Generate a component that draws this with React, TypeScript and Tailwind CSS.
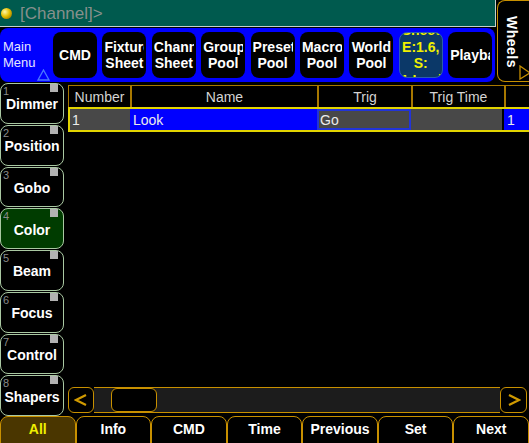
import React from "react";

const menuButtons: { lines: string[]; active?: boolean }[] = [
  { lines: ["CMD"] },
  { lines: ["Fixture", "Sheet"] },
  { lines: ["Channel", "Sheet"] },
  { lines: ["Group", "Pool"] },
  { lines: ["Preset", "Pool"] },
  { lines: ["Macro", "Pool"] },
  { lines: ["World", "Pool"] },
  { lines: ["Sheet", "E:1.6,", "S:", "1 Look"], active: true },
  { lines: ["Playback"] },
];

const sideButtons = ["Dimmer", "Position", "Gobo", "Color", "Beam", "Focus", "Control", "Shapers"];
const bottomButtons = ["All", "Info", "CMD", "Time", "Previous", "Set", "Next"];

function Chevron({ dir }: { dir: "left" | "right" }) {
  return (
    <svg width="14" height="14" viewBox="0 0 14 14">
      <polyline
        points={dir === "left" ? "12,2 2,7 12,12" : "2,2 12,7 2,12"}
        fill="none"
        stroke="#d09a00"
        strokeWidth="2.2"
        strokeLinejoin="miter"
      />
    </svg>
  );
}

export default function App() {
  return (
    <div className="w-[529px] h-[443px] bg-black overflow-hidden flex flex-col font-['Liberation_Sans',Arial,sans-serif]">
      {/* top area */}
      <div className="flex h-[83px] shrink-0">
        <div className="w-[497px] shrink-0 flex flex-col">
          <div className="h-[27px] mr-[1px] bg-[#005a4e] border-b border-r border-[#c6d0cc] flex items-center">
            <div className="ml-[1px] w-[11px] h-[11px] rounded-full bg-[radial-gradient(circle_at_35%_35%,#fff6a8,#e8c000_45%,#7a5a00)]" />
            <span className="ml-[8px] text-[17px] leading-none text-[#86908c]">[Channel]&gt;</span>
          </div>
          <div className="relative mt-[1px] h-[54px] mr-[2px] bg-[#0000ff] rounded-lg flex items-center pl-[3px]">
            <div className="w-[50px] shrink-0 text-[13px] leading-[16px] text-[#e4e4ff]">
              <div>Main</div>
              <div>Menu</div>
            </div>
            <svg className="absolute left-[37px] top-[41px]" width="13" height="12" viewBox="0 0 13 12">
              <polygon points="6.5,1 12,11 1,11" fill="none" stroke="#4a78ff" strokeWidth="1.3" />
            </svg>
            <div className="flex gap-[5.4px] h-[46px]">
              {menuButtons.map((b, i) => (
                <div
                  key={i}
                  className={
                    b.active
                      ? "w-[44px] shrink-0 rounded-lg bg-[#0b3868] border border-[#2c5cb0] overflow-hidden flex flex-col items-center justify-center px-[1px] text-[#f0f000] font-bold text-[14px] leading-[16.5px] text-center"
                      : "w-[44px] shrink-0 rounded-lg bg-black overflow-hidden flex flex-col items-center justify-center px-[2px] text-white font-bold text-[14px] leading-[16.5px] text-center"
                  }
                >
                  {b.lines.map((l, j) => (
                    <div key={j} className="w-full whitespace-nowrap shrink-0 overflow-hidden">
                      {l}
                    </div>
                  ))}
                </div>
              ))}
            </div>
          </div>
        </div>
        <div className="relative w-[32px] h-[82px] bg-black border-t border-l border-b border-[#c89000] rounded-l-lg flex flex-col items-center">
          <span className="mt-[15px] mr-[4px] [writing-mode:vertical-rl] text-white font-bold text-[14px] leading-none tracking-[0.5px]">
            Wheels
          </span>
          <svg className="absolute right-0 bottom-[1px]" width="10" height="15" viewBox="0 0 10 15">
            <polygon points="1,1 11,8 1,14" fill="none" stroke="#c89000" strokeWidth="1.3" />
          </svg>
        </div>
      </div>

      {/* middle */}
      <div className="flex h-[333px] shrink-0">
        <div className="w-[64px] flex flex-col gap-[1px]">
          {sideButtons.map((s, i) => (
            <div
              key={s}
              className={
                "relative flex-1 rounded-lg border border-[#a9c8a2] flex items-center justify-center pt-[2px] " +
                (s === "Color" ? "bg-[#003c00]" : "bg-black")
              }
            >
              <span className="absolute left-[2px] top-[2px] text-[11px] leading-none text-[#8a8a8a]">{i + 1}</span>
              <span className="absolute right-[5px] top-0 w-[8px] h-[8px] bg-[#b2b2b2]" />
              <span className="text-white font-bold text-[14px] leading-none">{s}</span>
            </div>
          ))}
        </div>

        <div className="ml-[4px] flex-1 flex flex-col">
          {/* table */}
          <div className="mt-[2px]">
            <div className="flex h-[22px] border-t border-[#a87800] text-[#d4d4d4] text-[14px]">
              {[
                ["Number", "w-[62px] border-l"],
                ["Name", "w-[187px] border-l-2"],
                ["Trig", "w-[94px] border-l-2"],
                ["Trig Time", "w-[93px] border-l-2"],
                ["", "flex-1 border-l-2"],
              ].map(([t, c], i) => (
                <div key={i} className={c + " border-[#a87800] flex items-center justify-center leading-none whitespace-nowrap"}>
                  {t}
                </div>
              ))}
            </div>
            <div className="flex h-[25px] border-y-2 border-l-2 border-[#e2d400] text-[14px] text-[#ececec] leading-none">
              <div className="w-[60px] bg-[#484848] flex items-center pl-[2px]">1</div>
              <div className="w-[187px] bg-[#0000ff] flex items-center pl-[3px]">Look</div>
              <div className="w-[94px] bg-[#484848] border-2 border-[#2234d8] flex items-center pl-[1px]">Go</div>
              <div className="w-[91px] bg-[#484848]" />
              <div className="w-[2px] bg-black" />
              <div className="flex-1 bg-[#0000ff] flex items-center pl-[3px]">1</div>
            </div>
          </div>
          <div className="flex-1" />
          {/* scrollbar */}
          <div className="flex h-[26px] mb-[3px] pr-[2px]">
            <div className="w-[26px] rounded-md border border-[#c89000] bg-black flex items-center justify-center">
              <Chevron dir="left" />
            </div>
            <div className="flex-1 bg-[#1c1c1c] border-y border-[#c89000] flex">
              <div className="ml-[17px] w-[46px] rounded-md border border-[#c89000] bg-black" />
            </div>
            <div className="w-[27px] rounded-md border border-[#c89000] bg-black flex items-center justify-center">
              <Chevron dir="right" />
            </div>
          </div>
        </div>
      </div>

      {/* bottom */}
      <div className="grid grid-cols-7 h-[29px] shrink-0">
        {bottomButtons.map((b) => (
          <div
            key={b}
            className={
              "rounded-t-lg border border-[#c89000] flex items-start justify-center pt-[5px] font-bold text-[14px] leading-none " +
              (b === "All" ? "bg-[#4a3600] text-[#f0f000]" : "bg-black text-white")
            }
          >
            {b}
          </div>
        ))}
      </div>
    </div>
  );
}
